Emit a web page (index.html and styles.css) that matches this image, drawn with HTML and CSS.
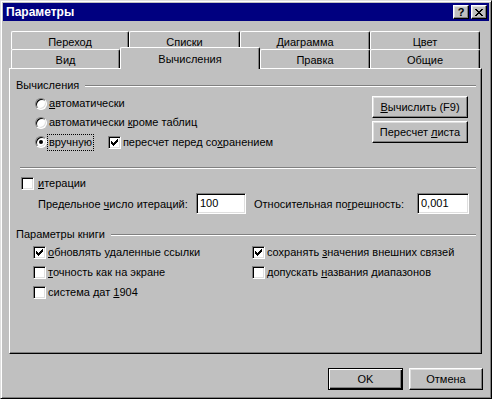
FILE: index.html
```html
<!DOCTYPE html>
<html lang="ru">
<head>
  <meta charset="UTF-8">
  <title>Параметры</title>
  <link rel="stylesheet" href="styles.css">
</head>
<body>
  <div class="window">
    <div class="titlebar">
      <span class="title">Параметры</span>
      <div class="caption">
        <div class="cap-btn help">?</div>
        <div class="cap-btn close">
          <svg width="8" height="7" viewBox="0 0 8 7"><path d="M0 0h2v1h-2z M6 0h2v1h-2z M1 1h2v1h-2z M5 1h2v1h-2z M2 2h4v1h-4z M3 3h2v1h-2z M2 4h4v1h-4z M1 5h2v1h-2z M5 5h2v1h-2z M0 6h2v1h-2z M6 6h2v1h-2z" fill="#000"/></svg>
        </div>
      </div>
    </div>

    <div class="dialog-body">
      <div class="tab-row back">
        <div class="tab tab-goto">Переход</div>
        <div class="tab tab-lists">Списки</div>
        <div class="tab tab-chart">Диаграмма</div>
        <div class="tab tab-color">Цвет</div>
      </div>
      <div class="tab-row front">
        <div class="tab tab-view">Вид</div>
        <div class="tab tab-calc selected">Вычисления</div>
        <div class="tab tab-edit">Правка</div>
        <div class="tab tab-general">Общие</div>
      </div>

      <div class="panel">
        <div class="legend"><span>Вычисления</span><div class="rule"></div></div>
        <div class="calc">
          <div class="radios">
            <div class="opt"><span class="radio"></span><span class="lbl"><u>а</u>втоматически</span></div>
            <div class="opt"><span class="radio"></span><span class="lbl">автоматически <u>к</u>роме таблиц</span></div>
            <div class="opt opt-last">
              <span class="radio on"></span><span class="lbl focus">вручную</span>
              <span class="check on save-check"><svg width="7" height="7" viewBox="0 0 7 7"><path d="M6 0h1v1h-1z M5 1h2v1h-2z M0 2h1v1h-1z M4 2h3v1h-3z M0 3h2v1h-2z M3 3h3v1h-3z M0 4h5v1h-5z M1 5h3v1h-3z M2 6h1v1h-1z" fill="#000"/></svg></span><span class="lbl">пересчет перед со<u>х</u>ранением</span>
            </div>
          </div>
          <div class="calc-btns">
            <div class="btn"><span><u>В</u>ычислить (F9)</span></div>
            <div class="btn"><span>Пересчет <u>л</u>иста</span></div>
          </div>
        </div>

        <div class="sep"></div>

        <div class="opt iter-row"><span class="check"></span><span class="lbl"><u>и</u>терации</span></div>
        <div class="limits">
          <span class="limit-lbl first">Предельное <u>ч</u>исло итераций:</span>
          <div class="field">100</div>
          <span class="limit-lbl second">Относительная по<u>г</u>решность:</span>
          <div class="field wide">0,001</div>
        </div>

        <div class="legend book"><span>Параметры книги</span><div class="rule"></div></div>
        <div class="book-grid">
          <div class="opt row"><span class="check on"><svg width="7" height="7" viewBox="0 0 7 7"><path d="M6 0h1v1h-1z M5 1h2v1h-2z M0 2h1v1h-1z M4 2h3v1h-3z M0 3h2v1h-2z M3 3h3v1h-3z M0 4h5v1h-5z M1 5h3v1h-3z M2 6h1v1h-1z" fill="#000"/></svg></span><span class="lbl"><u>о</u>бновлять удаленные ссылки</span></div>
          <div class="opt row"><span class="check on"><svg width="7" height="7" viewBox="0 0 7 7"><path d="M6 0h1v1h-1z M5 1h2v1h-2z M0 2h1v1h-1z M4 2h3v1h-3z M0 3h2v1h-2z M3 3h3v1h-3z M0 4h5v1h-5z M1 5h3v1h-3z M2 6h1v1h-1z" fill="#000"/></svg></span><span class="lbl">сохранять <u>з</u>начения внешних связей</span></div>
          <div class="opt row"><span class="check"></span><span class="lbl"><u>т</u>очность как на экране</span></div>
          <div class="opt row"><span class="check"></span><span class="lbl">допускать <u>н</u>азвания диапазонов</span></div>
          <div class="opt row"><span class="check"></span><span class="lbl">система дат <u>1</u>904</span></div>
        </div>
      </div>

      <div class="footer">
        <div class="btn default ok">OK</div>
        <div class="btn cancel">Отмена</div>
      </div>
    </div>
  </div>
</body>
</html>
```

FILE: styles.css
```css
* {
  box-sizing: border-box;
}

body {
  margin: 0;
  font-family: "Liberation Sans", Arial, sans-serif;
  font-size: 11px;
  color: #000;
  background: #c0c0c0;
}

u {
  text-decoration: underline;
}

.window {
  width: 492px;
  height: 399px;
  background: #c0c0c0;
  border: 1px solid;
  border-color: #dfdfdf #000 #000 #dfdfdf;
  box-shadow: inset 1px 1px #fff, inset -1px -1px #808080;
  padding: 2px;
  display: flex;
  flex-direction: column;
}

/* title bar */
.titlebar {
  height: 18px;
  background: #000080;
  color: #fff;
  display: flex;
  align-items: center;
  justify-content: space-between;
  padding: 0 2px 0 3px;
}

.title {
  font-weight: bold;
  font-size: 12px;
}

.caption {
  display: flex;
  gap: 2px;
}

.cap-btn {
  width: 16px;
  height: 14px;
  background: #c0c0c0;
  color: #000;
  border: 1px solid;
  border-color: #fff #000 #000 #fff;
  box-shadow: inset -1px -1px #808080, inset 1px 1px #dfdfdf;
  display: flex;
  justify-content: center;
  align-items: center;
  font-weight: bold;
  font-size: 11px;
  line-height: 1;
}

.dialog-body {
  flex: 1;
  display: flex;
  flex-direction: column;
  padding: 10px 7px 0 6px;
}

/* tabs */
.tab-row {
  display: flex;
  padding-left: 2px;
  height: 18px;
}

.tab-row.front {
  height: 19px;
  align-items: flex-end;
}

.tab {
  height: 100%;
  background: #c0c0c0;
  border-top: 1px solid #fff;
  border-left: 1px solid #fff;
  border-right: 1px solid #000;
  border-radius: 2px 2px 0 0;
  box-shadow: inset -1px 0 #808080;
  display: flex;
  justify-content: center;
  align-items: center;
  padding-top: 2px;
}

.tab.selected {
  height: 22px;
  margin-bottom: -1px;
  position: relative;
  z-index: 1;
  padding-top: 0;
}

.tab-goto { width: 118px; }
.tab-lists { width: 111px; }
.tab-chart { width: 130px; }
.tab-color { width: 110px; }
.tab-view { width: 109px; }
.tab-calc { width: 140px; }
.tab-edit { width: 110px; }
.tab-general { width: 110px; }

/* tab page */
.panel {
  height: 286px;
  border: 1px solid;
  border-color: #fff #000 #000 #fff;
  box-shadow: inset -1px -1px #808080;
  padding: 10px 5px 0 6px;
  display: flex;
  flex-direction: column;
}

.legend {
  height: 13px;
  line-height: 13px;
  display: flex;
  align-items: center;
}

.legend .rule {
  flex: 1;
  margin-left: 6px;
  border-top: 1px solid #808080;
  border-bottom: 1px solid #fff;
}

.legend.book {
  margin-top: 14px;
}

.opt {
  display: flex;
  align-items: center;
  height: 19px;
}

.lbl {
  border: 1px solid transparent;
  padding: 1px;
  line-height: 13px;
}

.lbl.focus {
  border: 1px dotted #000;
}

.calc {
  display: flex;
  justify-content: space-between;
  margin-top: 2px;
}

.radios {
  padding-left: 19px;
}

.opt-last {
  height: 20px;
}

.radio {
  width: 12px;
  height: 12px;
  border-radius: 50%;
  background: #fff;
  border: 1px solid;
  border-color: #808080 #fff #fff #808080;
  box-shadow: inset 1px 1px #000, inset -1px -1px #dfdfdf;
  display: flex;
  justify-content: center;
  align-items: center;
}

.radio.on::after {
  content: "";
  width: 4px;
  height: 4px;
  border-radius: 50%;
  background: #000;
}

.check {
  width: 13px;
  height: 13px;
  background: #fff;
  border: 1px solid;
  border-color: #808080 #fff #fff #808080;
  box-shadow: inset 1px 1px #000, inset -1px -1px #dfdfdf;
  display: flex;
  justify-content: center;
  align-items: center;
}

.save-check {
  margin-left: 14px;
}

.calc-btns {
  display: flex;
  flex-direction: column;
  gap: 3px;
  margin-top: 2px;
  margin-right: 8px;
}

.btn {
  height: 22px;
  background: #c0c0c0;
  border: 1px solid;
  border-color: #fff #000 #000 #fff;
  box-shadow: inset -1px -1px #808080, inset 1px 1px #dfdfdf;
  display: flex;
  justify-content: center;
  align-items: center;
}

.calc-btns .btn {
  width: 96px;
}

.sep {
  margin: 15px 0 0 4px;
  border-top: 1px solid #808080;
  border-bottom: 1px solid #fff;
}

.iter-row {
  margin-top: 5px;
  padding-left: 5px;
}

.iter-row .lbl {
  margin-left: 2px;
}

.limits {
  display: flex;
  align-items: center;
  height: 21px;
  padding-left: 22px;
}

.limit-lbl.first {
  width: 158px;
}

.limit-lbl.second {
  width: 163px;
  margin-left: 8px;
}

.field {
  width: 50px;
  height: 21px;
  background: #fff;
  border: 1px solid;
  border-color: #808080 #fff #fff #808080;
  box-shadow: inset 1px 1px #000, inset -1px -1px #dfdfdf;
  padding: 3px 0 0 3px;
}

.field.wide {
  width: 52px;
}

.book-grid {
  display: grid;
  grid-template-columns: 219px 1fr;
  margin-top: 1px;
  padding-left: 17px;
}

.book-grid .row {
  height: 20px;
}

/* bottom buttons */
.footer {
  display: flex;
  justify-content: flex-end;
  gap: 6px;
  margin-top: 14px;
  margin-right: -1px;
}

.ok {
  width: 75px;
}

.cancel {
  width: 74px;
}

.btn.default {
  border-color: #000;
  box-shadow: inset 1px 1px #fff, inset -1px -1px #000, inset -2px -2px #808080;
}
```
